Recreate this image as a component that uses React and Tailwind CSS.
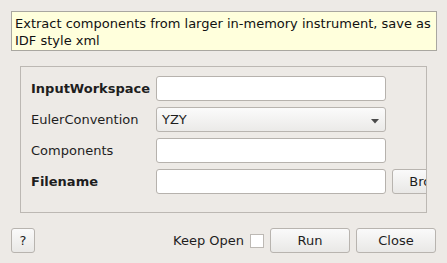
import React from "react";

function Input() {
  return <div className="h-[25px] w-[230px] shrink-0 rounded-[3px] border border-[#b6b2ad] bg-white" />;
}

function Btn({ children, className = "" }) {
  return (
    <div
      className={
        "flex h-[25px] items-center justify-center rounded-[3px] border border-[#b8b4af] bg-gradient-to-b from-[#fafafa] to-[#e9e8e6] text-[13px] text-[#1e1e1e] " +
        className
      }
    >
      {children}
    </div>
  );
}

export default function App() {
  return (
    <div
      className="flex h-[263px] w-[447px] flex-col bg-[#edeae6] text-[13px] text-[#1e1e1e]"
      style={{ fontFamily: '"DejaVu Sans", sans-serif' }}
    >
      <div className="ml-[11px] mt-[11px] h-[40px] w-[426px] border border-[#a9a7a0] bg-[#ffffdc] pl-[3px] pt-[3px] leading-[17px] text-[#111]">
        Extract components from larger in-memory instrument, save as
        <br />
        IDF style xml
      </div>

      <div className="ml-[20px] mt-[15px] flex h-[147px] w-[407px] flex-col gap-[6px] overflow-hidden border border-[#bcb8b3] pl-[10px] pt-[9px]">
        <div className="flex h-[25px] items-center">
          <div className="w-[125px] shrink-0 font-bold">InputWorkspace</div>
          <Input />
        </div>
        <div className="flex h-[25px] items-center">
          <div className="w-[125px] shrink-0">EulerConvention</div>
          <div className="relative flex h-[25px] w-[230px] shrink-0 items-center rounded-[3px] border border-[#b8b4af] bg-gradient-to-b from-[#fbfbfb] to-[#ebeae8] pl-[5px]">
            YZY
            <svg className="absolute right-[6px] top-[11px]" width="8" height="5" viewBox="0 0 8 5">
              <path d="M0 0 L8 0 L4 4.5 Z" fill="#4a4a4a" />
            </svg>
          </div>
        </div>
        <div className="flex h-[25px] items-center">
          <div className="w-[125px] shrink-0">Components</div>
          <Input />
        </div>
        <div className="flex h-[25px] items-center">
          <div className="w-[125px] shrink-0 font-bold">Filename</div>
          <Input />
          <Btn className="ml-[6px] w-[82px] shrink-0">Browse</Btn>
        </div>
      </div>

      <div className="mt-[15px] flex items-center px-[11px]">
        <Btn className="w-[24px]">?</Btn>
        <div className="flex-1" />
        <span>Keep Open</span>
        <div className="ml-[6px] h-[14px] w-[14px] border border-[#bdb9b4] bg-white" />
        <Btn className="ml-[6px] w-[80px] border-[#4f7fa8] from-[#f6f8fa] to-[#e2e6ea]">Run</Btn>
        <Btn className="ml-[6px] w-[80px]">Close</Btn>
      </div>
    </div>
  );
}
